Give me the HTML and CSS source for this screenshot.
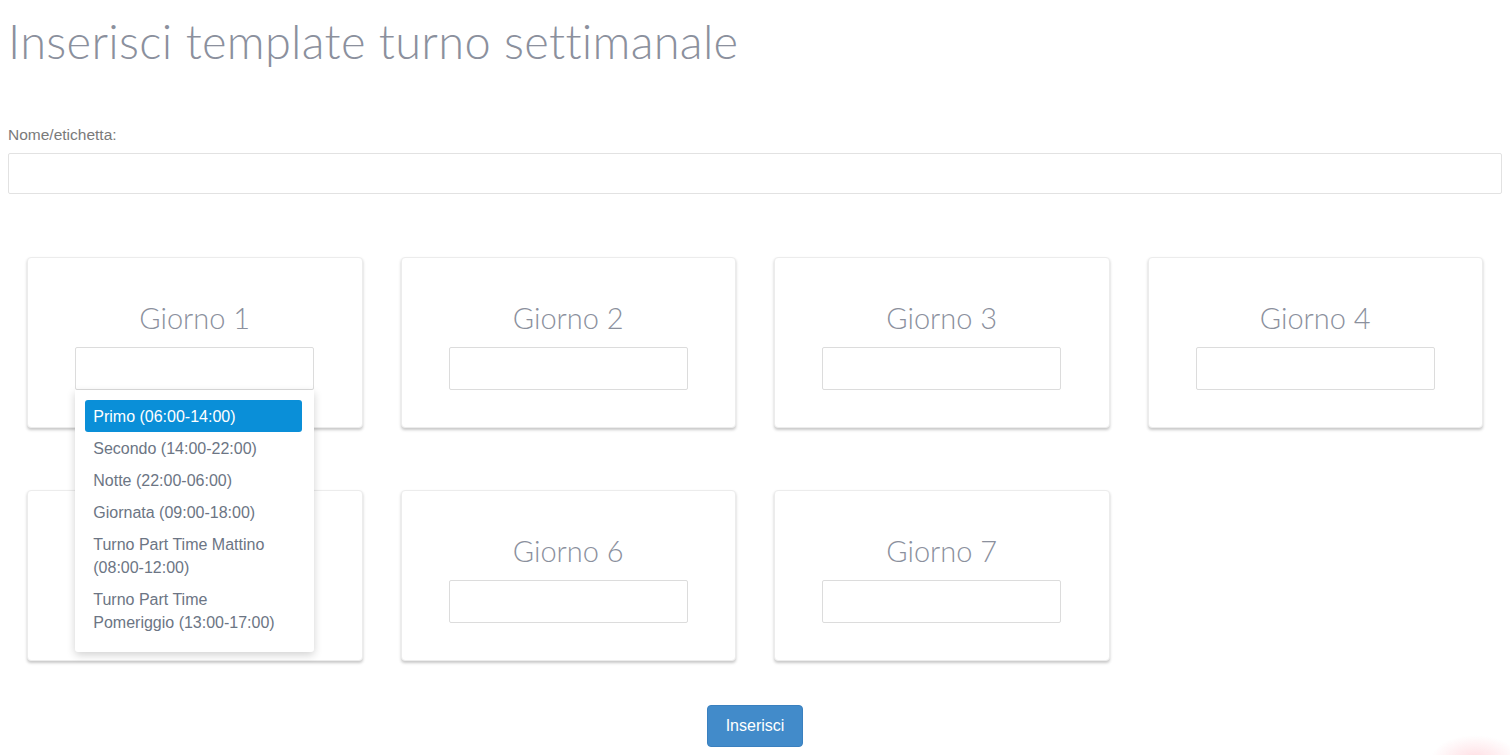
FILE: index.html
```html
<!DOCTYPE html>
<html lang="it">
<head>
<meta charset="utf-8">
<title>Inserisci template turno settimanale</title>
<link rel="stylesheet" href="styles.css">
</head>
<body>
<h1 class="page-title">Inserisci template turno settimanale</h1>
<form class="form">
  <label class="field-label" for="nome">Nome/etichetta:</label>
  <input class="field-input" id="nome" type="text">

  <div class="days">
    <div class="day-col">
      <div class="card">
        <h2 class="card-title">Giorno 1</h2>
        <div class="select-wrap">
          <input class="card-input" type="text">
          <ul class="dropdown">
            <li class="opt active">Primo (06:00-14:00)</li>
            <li class="opt">Secondo (14:00-22:00)</li>
            <li class="opt">Notte (22:00-06:00)</li>
            <li class="opt">Giornata (09:00-18:00)</li>
            <li class="opt">Turno Part Time Mattino (08:00-12:00)</li>
            <li class="opt">Turno Part Time Pomeriggio (13:00-17:00)</li>
          </ul>
        </div>
      </div>
    </div>
    <div class="day-col">
      <div class="card">
        <h2 class="card-title">Giorno 2</h2>
        <div class="select-wrap"><input class="card-input" type="text"></div>
      </div>
    </div>
    <div class="day-col">
      <div class="card">
        <h2 class="card-title">Giorno 3</h2>
        <div class="select-wrap"><input class="card-input" type="text"></div>
      </div>
    </div>
    <div class="day-col">
      <div class="card">
        <h2 class="card-title">Giorno 4</h2>
        <div class="select-wrap"><input class="card-input" type="text"></div>
      </div>
    </div>
    <div class="day-col">
      <div class="card card-covered">
        <h2 class="card-title">Giorno 5</h2>
        <div class="select-wrap"><input class="card-input" type="text"></div>
      </div>
    </div>
    <div class="day-col">
      <div class="card">
        <h2 class="card-title">Giorno 6</h2>
        <div class="select-wrap"><input class="card-input" type="text"></div>
      </div>
    </div>
    <div class="day-col">
      <div class="card">
        <h2 class="card-title">Giorno 7</h2>
        <div class="select-wrap"><input class="card-input" type="text"></div>
      </div>
    </div>
  </div>

  <div class="actions">
    <button class="btn-primary" type="button">Inserisci</button>
  </div>
</form>
<div class="glow"></div>
</body>
</html>
```

FILE: styles.css
```css
* { box-sizing: border-box; }

html, body {
  height: 100%;
}

body {
  margin: 0;
  padding: 0 8px;
  background: #ffffff;
  font-family: "Liberation Sans", Arial, sans-serif;
  color: #777;
  overflow: hidden;
}

.page-title {
  margin: 0;
  padding-top: 13px;
  font-family: Lato, "Open Sans", sans-serif;
  font-weight: 300;
  font-size: 47px;
  line-height: 56px;
  color: #8b909d;
  letter-spacing: 0.3px;
}

.form {
  margin-top: 56px;
}

.field-label {
  display: block;
  font-size: 15.5px;
  line-height: 20px;
  color: #7a7a7a;
  margin-bottom: 8px;
}

.field-input {
  display: block;
  width: 100%;
  height: 41px;
  border: 1px solid #e2e2e2;
  border-radius: 2px;
  background: #fff;
  outline: none;
}

.days {
  margin-top: 63px;
  display: grid;
  grid-template-columns: repeat(4, 1fr);
}

.day-col {
  padding: 0 19px;
  margin-bottom: 62px;
}

.card {
  height: 171px;
  background: #fff;
  border: 1px solid #ececec;
  border-radius: 4px;
  box-shadow: 0 2px 3px rgba(0, 0, 0, 0.22);
  padding-top: 42px;
  display: flex;
  flex-direction: column;
  align-items: center;
}

.card-covered .card-title {
  visibility: hidden;
}

.card-title {
  margin: 0 0 11px;
  font-family: Lato, "Open Sans", sans-serif;
  font-weight: 300;
  font-size: 29px;
  line-height: 36px;
  color: #8b909d;
}

.select-wrap {
  position: relative;
  width: 239px;
}

.card-input {
  display: block;
  width: 100%;
  height: 43px;
  border: 1px solid #dcdcdc;
  border-radius: 2px;
  background: #fff;
  outline: none;
}

.dropdown {
  position: absolute;
  top: 43px;
  left: 0;
  width: 239px;
  margin: 0;
  padding: 10px 12px 14px 10px;
  list-style: none;
  background: #fff;
  border-radius: 0 0 3px 3px;
  box-shadow: 0 3px 8px rgba(0, 0, 0, 0.18);
  z-index: 5;
}

.opt {
  padding: 4.5px 10px 4.5px 8px;
  font-size: 16px;
  line-height: 23px;
  color: #6c7584;
  border-radius: 3px;
}

.opt.active {
  background: #0a8fd8;
  color: #fff;
}

.actions {
  display: flex;
  justify-content: center;
  margin-top: -18px;
}

.btn-primary {
  width: 96px;
  height: 42px;
  border: 1px solid #3a80bf;
  border-radius: 4px;
  background: #428bca;
  color: #fff;
  font-family: "Liberation Sans", Arial, sans-serif;
  font-size: 16px;
  cursor: pointer;
}

.glow {
  position: fixed;
  right: -10px;
  bottom: -30px;
  width: 90px;
  height: 50px;
  border-radius: 50%;
  background: radial-gradient(ellipse at center, rgba(255, 120, 140, 0.25), rgba(255, 120, 140, 0) 70%);
  pointer-events: none;
}
```
